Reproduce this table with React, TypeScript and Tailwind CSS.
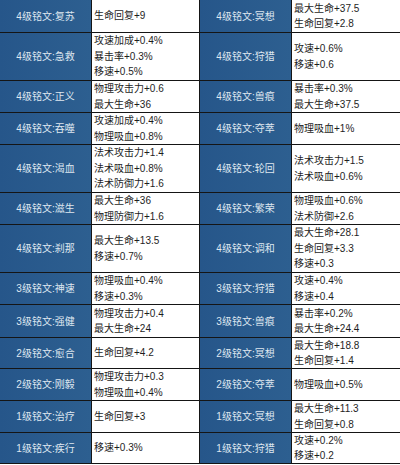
import React from "react";

type Row = { l: string; lv: string[]; r: string; rv: string[]; h: string };

const rows: Row[] = [
  { l: "4级铭文:复苏", lv: ["生命回复+9"], r: "4级铭文:冥想", rv: ["最大生命+37.5", "生命回复+2.8"], h: "h-[32px]" },
  { l: "4级铭文:急救", lv: ["攻速加成+0.4%", "暴击率+0.3%", "移速+0.5%"], r: "4级铭文:狩猎", rv: ["攻速+0.6%", "移速+0.6"], h: "h-[47px]" },
  { l: "4级铭文:正义", lv: ["物理攻击力+0.6", "最大生命+36"], r: "4级铭文:兽痕", rv: ["暴击率+0.3%", "最大生命+37.5"], h: "h-[31px]" },
  { l: "4级铭文:吞噬", lv: ["攻速加成+0.4%", "物理吸血+0.8%"], r: "4级铭文:夺萃", rv: ["物理吸血+1%"], h: "h-[31px]" },
  { l: "4级铭文:渴血", lv: ["法术攻击力+1.4", "法术吸血+0.8%", "法术防御力+1.6"], r: "4级铭文:轮回", rv: ["法术攻击力+1.5", "法术吸血+0.6%"], h: "h-[47px]" },
  { l: "4级铭文:滋生", lv: ["最大生命+36", "物理防御力+1.6"], r: "4级铭文:繁荣", rv: ["物理吸血+0.6%", "法术防御+2.6"], h: "h-[31px]" },
  { l: "4级铭文:刹那", lv: ["最大生命+13.5", "移速+0.7%"], r: "4级铭文:调和", rv: ["最大生命+28.1", "生命回复+3.3", "移速+0.3"], h: "h-[47px]" },
  { l: "3级铭文:神速", lv: ["物理吸血+0.4%", "移速+0.3%"], r: "3级铭文:狩猎", rv: ["攻速+0.4%", "移速+0.4"], h: "h-[31px]" },
  { l: "3级铭文:强健", lv: ["物理攻击力+0.4", "最大生命+24"], r: "3级铭文:兽痕", rv: ["暴击率+0.2%", "最大生命+24.4"], h: "h-[32px]" },
  { l: "2级铭文:愈合", lv: ["生命回复+4.2"], r: "2级铭文:冥想", rv: ["最大生命+18.8", "生命回复+1.4"], h: "h-[30px]" },
  { l: "2级铭文:刚毅", lv: ["物理攻击力+0.3", "物理吸血+0.4%"], r: "2级铭文:夺萃", rv: ["物理吸血+0.5%"], h: "h-[31px]" },
  { l: "1级铭文:治疗", lv: ["生命回复+3"], r: "1级铭文:冥想", rv: ["最大生命+11.3", "生命回复+0.8"], h: "h-[31px]" },
  { l: "1级铭文:疾行", lv: ["移速+0.3%"], r: "1级铭文:狩猎", rv: ["攻速+0.2%", "移速+0.2"], h: "h-[30px]" },
];

function Label({ text, h }: { text: string; h: string }) {
  return (
    <div className={`${h} flex items-center justify-center bg-gradient-to-r from-[#26568a] to-[#2d5f90] text-[#dfe7f0] text-[10px]`}>
      {text}
    </div>
  );
}

function Values({ items, h }: { items: string[]; h: string }) {
  return (
    <div className={`${h} flex flex-col justify-center bg-white pl-[2px] text-[#1e1e1e] text-[10px] leading-[15.5px]`}>
      {items.map((t, i) => (
        <div key={i}>{t}</div>
      ))}
    </div>
  );
}

export default function App() {
  return (
    <div className="w-[400px] h-[465px] bg-white" style={{ fontFamily: '"Liberation Sans", "Noto Sans CJK SC", sans-serif' }}>
      <div className="grid grid-cols-[91px_107px_91px_108px] gap-px bg-[#151515] pb-px">
        {rows.map((r, i) => (
          <React.Fragment key={i}>
            <Label text={r.l} h={r.h} />
            <Values items={r.lv} h={r.h} />
            <Label text={r.r} h={r.h} />
            <Values items={r.rv} h={r.h} />
          </React.Fragment>
        ))}
      </div>
    </div>
  );
}
